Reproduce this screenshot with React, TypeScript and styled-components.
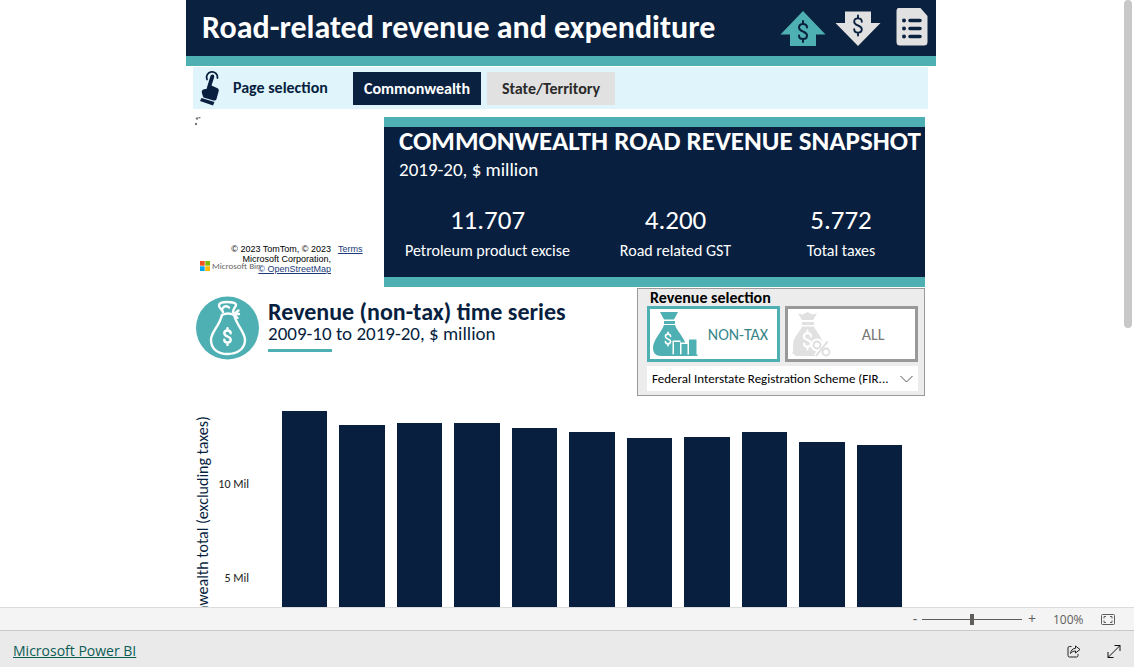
import React from "react";
import styled, { createGlobalStyle, css } from "styled-components";

const navy = "#081f3f";
const headerNavy = "#0a213f";
const teal = "#4fb0b4";
const calibri = `Calibri, Carlito, Lato, sans-serif`;
const segoe = `"Segoe UI", "Open Sans", sans-serif`;

const GlobalStyle = createGlobalStyle`
  *, *::before, *::after { box-sizing: border-box; }
  body { margin: 0; background: #fff; font-family: ${calibri}; color: ${navy}; }
  h1, h2, p, dl, dd { margin: 0; }
  button { border: 0; padding: 0; background: none; font: inherit; color: inherit; cursor: pointer; }
`;

const Shell = styled.div`
  display: flex;
  flex-direction: column;
  height: 100vh;
`;

const Viewport = styled.main`
  display: flex;
  flex: 1;
  min-height: 0;
  overflow: hidden;
`;

const Scroller = styled.div`
  flex: 1;
  min-width: 0;
  overflow-y: auto;
  scrollbar-width: none;
`;

const ScrollTrack = styled.div`
  flex: none;
  width: 12px;
  padding: 0 2px;
`;

const ScrollThumb = styled.div`
  height: 54%;
  border-radius: 4px;
  background: #c8c8c8;
`;

const Report = styled.article`
  width: 100%;
  max-width: 750px;
  margin: 0 auto;
`;

const Header = styled.header`
  display: flex;
  align-items: center;
  height: 66px;
  padding: 0 8px 0 16px;
  border-bottom: 10px solid ${teal};
  background: ${headerNavy};
`;

const Title = styled.h1`
  flex: 1;
  color: #fff;
  font-size: 32px;
  line-height: 40px;
  font-weight: 700;
  white-space: nowrap;
`;

const HeaderIcons = styled.div`
  display: grid;
  grid-template-columns: 55px 61px 32px;
  align-items: center;
  svg { display: block; }
`;

const PageNav = styled.nav`
  display: flex;
  align-items: center;
  height: 42px;
  margin: 1px 8px 8px 7px;
  padding-left: 6px;
  background: #e0f4fc;
`;

const NavLabel = styled.span`
  width: 132px;
  padding-left: 12px;
  font-size: 16px;
  line-height: 20px;
  font-weight: 600;
`;

const NavButton = styled.button<{ $active?: boolean }>`
  width: 128px;
  height: 33px;
  margin-right: 6px;
  font-size: 16px;
  font-weight: 700;
  color: ${(p) => (p.$active ? "#fff" : "#2b2b2b")};
  background: ${(p) => (p.$active ? headerNavy : "#e1e1e1")};
`;

const TopRow = styled.div`
  display: flex;
  padding: 0 11px 0 8px;
`;

const MapVisual = styled.section`
  position: relative;
  display: flex;
  flex-direction: column;
  justify-content: space-between;
  flex: 1;
  height: 157px;
  font-family: "Liberation Sans", Arial, sans-serif;
  font-size: 9px;
  line-height: 10px;
  color: #000;
`;

const MapCredits = styled.div`
  display: flex;
  align-items: flex-start;
  gap: 7px;
  padding-left: 32px;
`;

const Copyright = styled.p`
  width: 105px;
  text-align: right;
`;

const MapLink = styled.a`
  color: #1b3a78;
  white-space: nowrap;
`;

const BingLogo = styled.div`
  position: absolute;
  left: 6px;
  bottom: 3px;
  display: flex;
  align-items: center;
  gap: 2px;
  white-space: nowrap;
  font-family: ${calibri};
  font-size: 9px;
  color: #666;
  svg { flex: none; }
`;

const Snapshot = styled.section`
  width: 541px;
  height: 170px;
  border-top: 10px solid ${teal};
  border-bottom: 10px solid ${teal};
  background: ${navy};
  color: #fff;
`;

const SnapshotTitle = styled.h2`
  padding-left: 15px;
  font-size: 27px;
  line-height: 28px;
  font-weight: 700;
  white-space: nowrap;
`;

const SnapshotPeriod = styled.p`
  padding-left: 15px;
  font-size: 19px;
  line-height: 30px;
`;

const Stats = styled.dl`
  display: grid;
  grid-template-columns: 207fr 169fr 162fr;
  margin-top: 18px;
  padding-right: 3px;
`;

const Stat = styled.div`
  display: flex;
  flex-direction: column-reverse;
  text-align: center;
`;

const StatLabel = styled.dt`
  font-size: 16px;
  line-height: 28px;
`;

const StatValue = styled.dd`
  font-size: 27px;
  line-height: 34px;
`;

const SeriesRow = styled.div`
  display: flex;
  justify-content: space-between;
  padding: 0 11px 0 10px;
`;

const SeriesHeading = styled.div`
  display: flex;
  gap: 8px;
  padding-top: 9px;
`;

const SeriesTitle = styled.h2`
  padding-top: 5px;
  font-size: 24px;
  line-height: 22px;
  font-weight: 700;
  white-space: nowrap;
`;

const SeriesPeriod = styled.p`
  font-size: 19px;
  line-height: 22px;
`;

const Accent = styled.div`
  width: 64px;
  height: 3px;
  margin-top: 4px;
  background: ${teal};
`;

const SelectionPanel = styled.section`
  width: 288px;
  height: 108px;
  margin-top: 1px;
  padding: 0 6px 0 9px;
  border: 1px solid #999;
  background: #ececec;
`;

const PanelTitle = styled.h2`
  padding-left: 3px;
  color: #000;
  font-size: 16px;
  line-height: 17px;
  font-weight: 700;
`;

const ChoiceRow = styled.div`
  display: flex;
  gap: 5px;
`;

const Choice = styled.button<{ $active?: boolean }>`
  display: flex;
  align-items: center;
  flex: 1;
  height: 56px;
  border: 3px solid ${(p) => (p.$active ? teal : "#999")};
  background: #fff;
  color: ${(p) => (p.$active ? "#38868a" : "#777")};
  font-size: 16px;
  svg { flex: none; margin-left: 3px; }
  span { flex: 1; text-align: center; }
`;

const Dropdown = styled.label`
  display: flex;
  align-items: center;
  height: 25px;
  margin-top: 4px;
  padding: 0 5px;
  background: #fff;
`;

const DropdownSelect = styled.select`
  appearance: none;
  flex: 1;
  min-width: 0;
  padding: 0;
  border: 0;
  background: none;
  color: #000;
  font-family: ${calibri};
  font-size: 13px;
  white-space: nowrap;
`;

const Chart = styled.section`
  display: flex;
  height: 308px;
  padding: 15px 34px 32px 7px;
`;

const AxisTitle = styled.p`
  width: 20px;
  margin-top: 5px;
  writing-mode: vertical-rl;
  transform: rotate(180deg);
  text-align: right;
  font-size: 16px;
  line-height: 20px;
  white-space: nowrap;
`;

const AxisLabels = styled.div`
  display: flex;
  flex-direction: column;
  width: 36px;
  padding-top: 63px;
  gap: 74px;
  color: #222;
  font-size: 12px;
  line-height: 20px;
  text-align: right;
`;

const Bars = styled.div`
  display: flex;
  align-items: flex-end;
  flex: 1;
  gap: 12px;
  height: 261px;
  margin-left: 33px;
`;

const Bar = styled.div`
  flex: 1;
  background: ${navy};
`;

const bottomBar = css`
  display: flex;
  align-items: center;
  flex: none;
`;

const ZoomBar = styled.div`
  ${bottomBar}
  justify-content: flex-end;
  height: 23px;
  padding-right: 19px;
  border-top: 1px solid #dcdcdc;
  background: #f4f4f4;
  color: #605e5c;
  font-family: ${segoe};
  font-size: 12px;
  svg { display: block; }
`;

const ZoomButton = styled.button`
  width: 14px;
  font-size: 14px;
  line-height: 20px;
`;

const ZoomSlider = styled.input`
  appearance: none;
  width: 100px;
  height: 11px;
  margin: 0 3px 0 0;
  background: linear-gradient(#605e5c, #605e5c) center / 100% 1px no-repeat;
  &::-webkit-slider-thumb {
    appearance: none;
    width: 4px;
    height: 11px;
    background: #605e5c;
  }
`;

const ZoomValue = styled.span`
  width: 62px;
  padding-left: 14px;
`;

const Footer = styled.footer`
  ${bottomBar}
  justify-content: space-between;
  height: 37px;
  padding: 4px 13px 0;
  border-top: 1px solid #c8c8c8;
  background: #eaeaea;
  font-family: ${segoe};
`;

const BrandLink = styled.a`
  color: #0b5c55;
  font-size: 14px;
  line-height: 20px;
`;

const FooterActions = styled.div`
  display: flex;
  gap: 26px;
  button, svg { display: block; }
`;

const barHeights = [261, 247, 249, 249, 244, 240, 234, 235, 240, 230, 227];

const stats = [
  { value: "11.707", label: "Petroleum product excise" },
  { value: "4.200", label: "Road related GST" },
  { value: "5.772", label: "Total taxes" },
];

const dollar =
  "M4-4C4-6.500 2-7.500 0-7.500C-2.500-7.500-4-6-4-4C-4-1.500-2-.8 0 0C2.500 1 4 2 4 4C4 6 2.500 7.500 0 7.500C-2.500 7.500-4 6-4 4M0-10.500V-7.500M0 7.500V10.500";

const DollarGlyph = ({ x, y, scale, color, weight = 2 }: { x: number; y: number; scale: number; color: string; weight?: number }) => (
  <path d={dollar} transform={`translate(${x} ${y}) scale(${scale})`} fill="none" stroke={color} strokeWidth={weight} strokeLinecap="round" />
);

const RevenueIcon = () => (
  <svg width="46" height="36" viewBox="0 0 46 36">
    <path d="M23 1 45.500 24.500H36V36H10V24.500H.500Z" fill={teal} />
    <DollarGlyph x={23} y={21.5} scale={1} color={headerNavy} />
  </svg>
);

const ExpenditureIcon = () => (
  <svg width="46" height="36" viewBox="0 0 46 36">
    <path d="M23 36 45.500 13H36V1.500H10V13H.500Z" fill="#e1e1e1" />
    <DollarGlyph x={23} y={15.5} scale={0.95} color={headerNavy} />
  </svg>
);

const ReportIcon = () => (
  <svg width="32" height="40" viewBox="0 1 32 40">
    <path d="M4 .500h20L31.500 9v26a3.500 3.500 0 0 1-3.500 3.500H4A3.500 3.500 0 0 1 .500 35V4A3.500 3.500 0 0 1 4 .500Z" fill="#e1e1e1" />
    <path d="M14 13.500h10M14 21.500h10M14 29.500h10" stroke={headerNavy} strokeWidth="3.600" strokeLinecap="round" />
    <g fill={headerNavy}>
      <circle cx="8" cy="13.500" r="2" />
      <circle cx="8" cy="21.500" r="2" />
      <circle cx="8" cy="29.500" r="2" />
    </g>
  </svg>
);

const TouchIcon = () => (
  <svg width="22" height="36" viewBox="0 0 22 36">
    <path d="M8 9.500A5.500 5.500 0 1 1 18.500 8" fill="none" stroke={navy} strokeWidth="1.800" strokeLinecap="round" />
    <path d="M13.500 4.500c1.400.2 2 1.200 1.700 2.700L12.500 15.500l5.500 2.500c1.500.8 2 1.700 1.700 3L17.500 29c-.5 1.500-1.500 1.800-3 1.400L4.500 27.500C3 24 2 21.500 3.500 20c1-1 2.500-1 4-1L11.300 6.500c.3-1.100 1-2 2.200-2Z" fill={navy} />
    <path d="M2.500 28 15.500 32l-1.500 3.500L1 31Z" fill={navy} />
  </svg>
);

const BagBadge = () => (
  <svg width="64" height="64" viewBox="0 0 64 64">
    <circle cx="31.500" cy="32" r="31.500" fill={teal} />
    <g fill="none" stroke="#fff" strokeWidth="2.400" strokeLinecap="round" strokeLinejoin="round">
      <path d="M26 19C23 31 15 36 15 44c0 9 7 14 16.500 14S49 53 49 44c0-8-8-14-11-25" />
      <path d="M26 19c4-2 8-2 12 0" />
      <path d="M27 16c-1-3-4.500-4-4-7 .5-2.500 4-3 8-3s8 .5 9 2.500c.8 2-3 3.500-3 7.500M27 12c1-2.500 4-2 6-.5" />
      <path d="M38 18l4.500-3.500M38 18.500l3.500 3.500M38 18h5" />
    </g>
    <DollarGlyph x={31.500} y={40.500} scale={0.8} color="#fff" weight={3} />
  </svg>
);

const BagChartIcon = () => (
  <svg width="46" height="46" viewBox="0 0 46 46">
    <path d="M7 1h18l-4 7.500H11ZM11 10h11v3H11Z" fill={teal} />
    <path d="M11 14h11c3 8 11 14 11 22 0 6-3 9-8 9H8c-5 0-8-3-8-8 0-8 8-15 11-23Z" fill={teal} />
    <DollarGlyph x={15} y={28} scale={0.64} color="#fff" weight={2.600} />
    <path d="M19.500 43.500V29.500H27.500V31.500H35V27H45V43.500Z" fill="#fff" />
    <path d="M21 31h6v13h-6ZM28.500 33h6v11h-6ZM36 28.500h7.500V44H36Z" fill={teal} />
    <path d="M19.500 43.500h25V45h-25Z" fill={teal} />
  </svg>
);

const BagPercentIcon = () => (
  <svg width="40" height="46" viewBox="-1 0 40 46">
    <g fill="#e1e1e1">
      <path d="M6 2.500 11 3.500 15.500 1 20 3.500l5-1-4 6.500h-11ZM10 11h12v3H10Z" />
      <path d="M10 15.500h12c2 5 8 10 9 18l-2 8-3 3.500H4L0 42C2 40 1 38 1 34c0-8 7-13 9-18.500Z" />
    </g>
    <DollarGlyph x={15.5} y={29} scale={0.9} color="#fff" weight={2.200} />
    <g stroke="#fff" strokeWidth="5" fill="#fff">
      <circle cx="25" cy="34" r="4" />
      <circle cx="33.500" cy="41" r="3" />
      <path d="M35.500 30.500 24 45" />
    </g>
    <g stroke="#dcdcdc" strokeWidth="1.800" fill="#fff">
      <circle cx="25" cy="34" r="3.500" />
      <circle cx="34" cy="41" r="3.500" />
      <path d="M35.500 30.500 24 45" />
    </g>
  </svg>
);

export default function App() {
  return (
    <Shell>
      <GlobalStyle />
      <Viewport>
        <Scroller>
          <Report>
            <Header>
              <Title>Road-related revenue and expenditure</Title>
              <HeaderIcons>
                <button aria-label="Revenue"><RevenueIcon /></button>
                <button aria-label="Expenditure"><ExpenditureIcon /></button>
                <button aria-label="Report notes"><ReportIcon /></button>
              </HeaderIcons>
            </Header>

            <PageNav>
              <TouchIcon />
              <NavLabel>Page selection</NavLabel>
              <NavButton $active>Commonwealth</NavButton>
              <NavButton>State/Territory</NavButton>
            </PageNav>

            <TopRow>
              <MapVisual aria-label="Map">
                <svg width="8" height="10" viewBox="0 0 8 10" fill="#777">
                  <circle cx="2" cy="7" r="1.200" />
                  <circle cx="3" cy="1.500" r="1.200" />
                  <circle cx="5.500" cy="0.500" r="1" />
                </svg>
                <BingLogo>
                  <svg width="10" height="10" viewBox="0 0 10 10">
                    <path d="M0 0h4.700v4.700H0Z" fill="#f25022" />
                    <path d="M5.300 0H10v4.700H5.300Z" fill="#7fba00" />
                    <path d="M0 5.300h4.700V10H0Z" fill="#00a4ef" />
                    <path d="M5.300 5.300H10V10H5.300Z" fill="#ffb900" />
                  </svg>
                  Microsoft Bin
                </BingLogo>
                <MapCredits>
                  <Copyright>
                    © 2023 TomTom, © 2023 Microsoft Corporation,{" "}
                    <MapLink href="#osm">© OpenStreetMap</MapLink>
                  </Copyright>
                  <MapLink href="#terms">Terms</MapLink>
                </MapCredits>
              </MapVisual>

              <Snapshot>
                <SnapshotTitle>COMMONWEALTH ROAD REVENUE SNAPSHOT</SnapshotTitle>
                <SnapshotPeriod>2019-20, $ million</SnapshotPeriod>
                <Stats>
                  {stats.map((s) => (
                    <Stat key={s.label}>
                      <StatLabel>{s.label}</StatLabel>
                      <StatValue>{s.value}</StatValue>
                    </Stat>
                  ))}
                </Stats>
              </Snapshot>
            </TopRow>

            <SeriesRow>
              <SeriesHeading>
                <BagBadge />
                <div>
                  <SeriesTitle>Revenue (non-tax) time series</SeriesTitle>
                  <SeriesPeriod>2009-10 to 2019-20, $ million</SeriesPeriod>
                  <Accent />
                </div>
              </SeriesHeading>
              <SelectionPanel>
                <PanelTitle>Revenue selection</PanelTitle>
                <ChoiceRow>
                  <Choice $active><BagChartIcon /><span>NON-TAX</span></Choice>
                  <Choice><BagPercentIcon /><span>ALL</span></Choice>
                </ChoiceRow>
                <Dropdown>
                  <DropdownSelect aria-label="Revenue source">
                    <option>Federal Interstate Registration Scheme (FIR...</option>
                  </DropdownSelect>
                  <svg width="13" height="8" viewBox="0 0 13 8">
                    <path d="M.500 1 6.500 7l6-6" fill="none" stroke="#555" />
                  </svg>
                </Dropdown>
              </SelectionPanel>
            </SeriesRow>

            <Chart>
              <AxisTitle>Commonwealth total (excluding taxes)</AxisTitle>
              <AxisLabels>
                <span>10 Mil</span>
                <span>5 Mil</span>
              </AxisLabels>
              <Bars>
                {barHeights.map((h, i) => (
                  <Bar key={i} style={{ height: h }} />
                ))}
              </Bars>
            </Chart>
          </Report>
        </Scroller>
        <ScrollTrack><ScrollThumb /></ScrollTrack>
      </Viewport>

      <ZoomBar>
        <ZoomButton aria-label="Zoom out">-</ZoomButton>
        <ZoomSlider type="range" min="0" max="200" defaultValue="100" aria-label="Zoom" />
        <ZoomButton aria-label="Zoom in">+</ZoomButton>
        <ZoomValue>100%</ZoomValue>
        <button aria-label="Fit to page">
          <svg width="14" height="11" viewBox="0 0 14 11" fill="none" stroke="#605e5c">
            <rect x=".5" y=".5" width="13" height="10" rx="1" />
            <path d="M3 4.500v-2h2M9 2.500h2v2M11 6.500v2h-2M5 8.500H3v-2" />
          </svg>
        </button>
      </ZoomBar>

      <Footer>
        <BrandLink href="#powerbi">Microsoft Power BI</BrandLink>
        <FooterActions>
          <button aria-label="Share">
            <svg width="14" height="13" viewBox="0 0 14 13" fill="none" stroke="#222">
              <path d="M4.500 1.500H2.500A1.500 1.500 0 0 0 1 3v7.500A1.500 1.500 0 0 0 2.500 12H9.500A1.500 1.500 0 0 0 11 10.500V9" />
              <path d="M8.500 1l4.500 3.500L8.500 8V6C6.500 6 5 6.500 3.500 8.500c.3-3 2-5 5-5.200Z" />
            </svg>
          </button>
          <button aria-label="Full screen">
            <svg width="14" height="13" viewBox="0 0 14 13" fill="none" stroke="#111">
              <path d="M1 12.500 13 .500M7.500.500H13V6M1 7v5.500h5.500" />
            </svg>
          </button>
        </FooterActions>
      </Footer>
    </Shell>
  );
}
